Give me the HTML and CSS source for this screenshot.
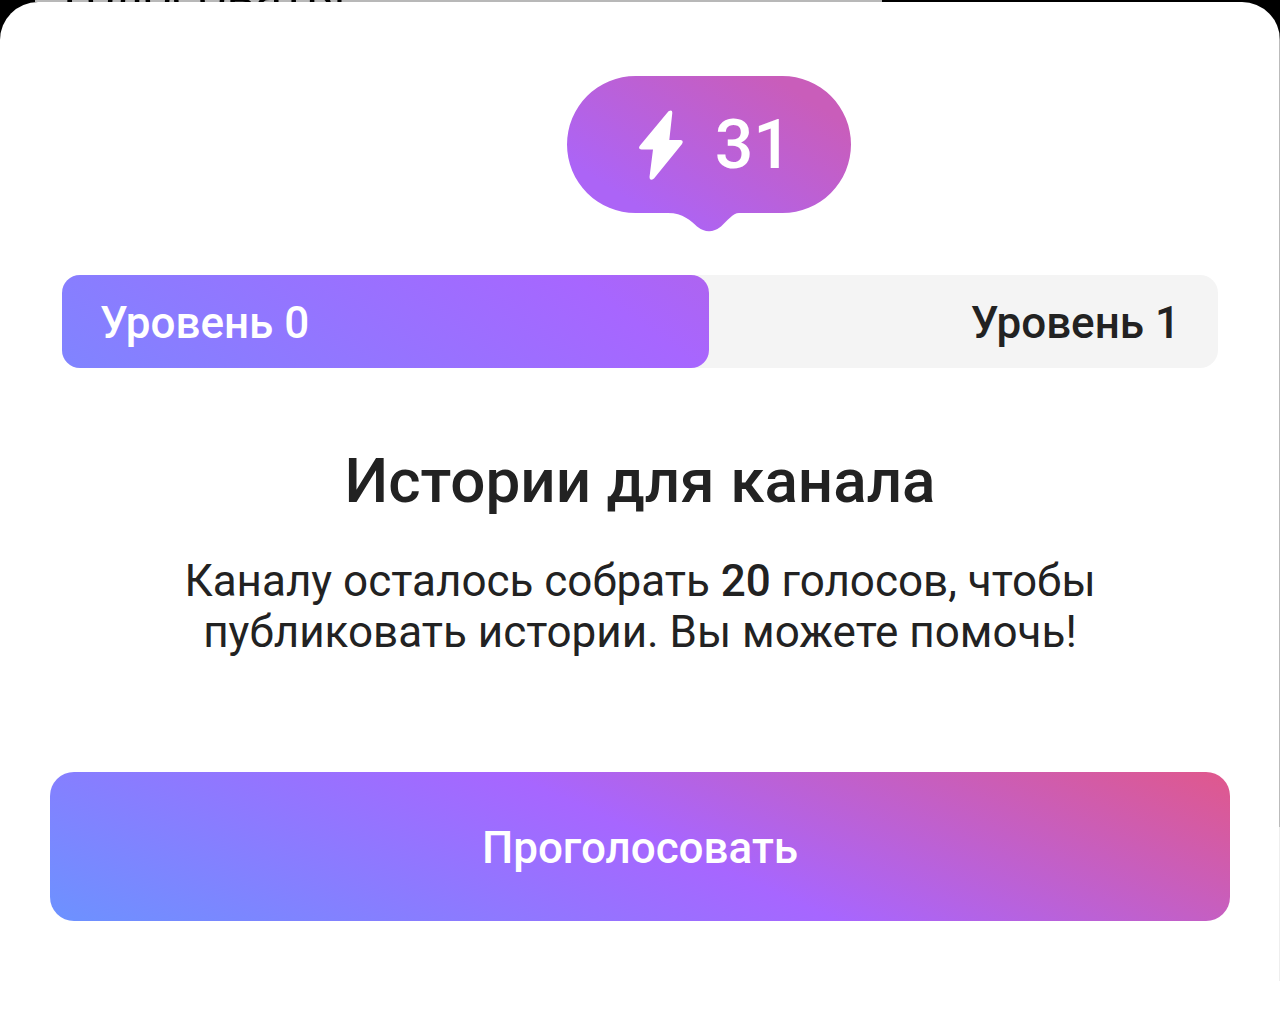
FILE: index.html
```html
<!DOCTYPE html>
<html lang="ru">
<head>
<meta charset="utf-8">
<meta name="viewport" content="width=device-width, initial-scale=1">
<title>Истории для канала</title>
<link rel="stylesheet" href="styles.css">
</head>
<body>
<div class="backdrop"><div class="message"><span class="message-text">Голосовать!</span></div></div>
<main class="sheet">
  <section class="boost">
    <div class="marker-row">
      <div class="marker">
        <svg class="marker-shape" viewBox="0 0 284 156" aria-hidden="true">
          <defs>
            <linearGradient id="marker-fill" gradientUnits="userSpaceOnUse" x1="40" y1="111" x2="140" y2="-43">
              <stop offset="0" stop-color="#ac64f6"/>
              <stop offset="1" stop-color="#c95dba"/>
            </linearGradient>
          </defs>
          <path fill="url(#marker-fill)" d="M68.500 0H215.500A68.500 68.500 0 0 1 215.500 137H172C166 137 160 145 154 150.500Q142 160 130 150.500C124 145 116 137 101 137H68.500A68.500 68.500 0 0 1 68.500 0Z"/>
        </svg>
        <div class="marker-content">
          <svg class="bolt" viewBox="0 0 44 70" aria-hidden="true">
            <path fill="#fff" d="M29.500 1.200Q33.500-1 33.300 3L30.300 30H41.500Q45 30.500 43 34L15 68.500Q10.500 71.500 10.500 67L14 39.500H2.500Q-1.500 39 1 35.500Z"/>
          </svg>
          <span>31</span>
        </div>
      </div>
    </div>
    <div class="levels">
      <div class="level-current">Уровень 0</div>
      <div class="level-next">Уровень 1</div>
    </div>
  </section>
  <h1 class="title">Истории для канала</h1>
  <p class="description">Каналу осталось собрать <strong>20</strong> голосов, чтобы публиковать истории. Вы можете помочь!</p>
  <button class="vote" type="button">Проголосовать</button>
</main>
</body>
</html>
```
FILE: styles.css
```css
* {
  box-sizing: border-box;
}

body {
  margin: 0;
  min-height: 100vh;
  display: flex;
  flex-direction: column;
  background: #000;
  color: #222;
  font-family: Roboto, "Noto Sans", sans-serif;
}

.backdrop {
  height: 2px;
  padding-left: 35px;
  overflow: hidden;
}

.message {
  width: 68%;
  height: 2px;
  padding-left: 28px;
  display: flex;
  align-items: flex-end;
  background: #b8b8b8;
  color: #000;
  font-size: 50px;
  line-height: 12px;
}

.sheet {
  flex: 1;
  padding: 74px 50px 40px;
  border-radius: 38px 38px 0 0;
  background: linear-gradient(#bbb 80%, #eee 80% 95%, #fff 95%) right / 1px 100% no-repeat #fff;
}

.boost {
  padding: 0 12px;
}

.marker-row {
  width: 56%;
  display: flex;
  justify-content: flex-end;
}

.marker {
  width: 284px;
  height: 156px;
  margin-right: -142px;
  display: grid;
  flex: none;
}

.marker-shape,
.marker-content {
  grid-area: 1 / 1;
}

.marker-content {
  height: 137px;
  padding-left: 12px;
  display: flex;
  align-items: center;
  justify-content: center;
  gap: 32px;
  color: #fff;
  font-size: 68px;
  font-weight: 500;
  line-height: 80px;
}

.bolt {
  width: 44px;
  height: 70px;
}

.levels {
  height: 93px;
  margin-top: 43px;
  display: flex;
  align-items: stretch;
  border-radius: 18px;
  background: #f4f4f4;
  font-size: 44px;
  font-weight: 500;
  line-height: 97px;
}

.level-current {
  width: 56%;
  padding-left: 38px;
  border-radius: 18px;
  background: linear-gradient(36deg, #8084ff, #a766ff 82%, #ae64f0);
  color: #fff;
}

.level-next {
  flex: 1;
  padding-right: 38px;
  text-align: right;
}

.title {
  margin: 76px 0 0;
  font-size: 62px;
  font-weight: 500;
  line-height: 74px;
  text-align: center;
}

.description {
  max-width: 920px;
  margin: 38px auto 0;
  font-size: 44px;
  line-height: 51px;
  text-align: center;
}

.description strong {
  font-weight: 500;
}

.vote {
  width: 100%;
  height: 149px;
  margin-top: 114px;
  padding: 2px 0 0;
  border: 0;
  border-radius: 24px;
  background: linear-gradient(24deg, #6c92ff, #a766ff 52%, #e0588c);
  color: #fff;
  font: inherit;
  font-size: 44px;
  font-weight: 500;
  cursor: pointer;
}
```
